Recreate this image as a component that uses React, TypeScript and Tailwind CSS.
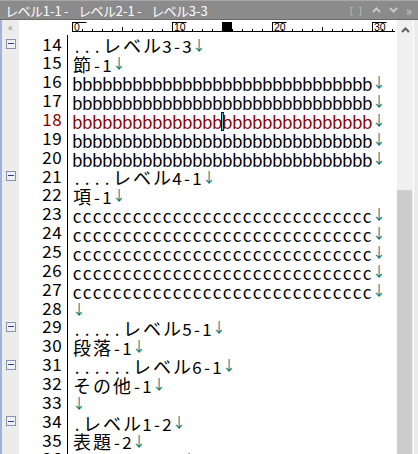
import React from "react";

const b30 = "b".repeat(30);
const c30 = "c".repeat(30);

const lines: { no: number; text: string; fold?: boolean; red?: boolean }[] = [
  { no: 14, text: "...レベル3-3↓", fold: true },
  { no: 15, text: "節-1↓" },
  { no: 16, text: b30 + "↓" },
  { no: 17, text: b30 + "↓" },
  { no: 18, text: b30 + "↓", red: true },
  { no: 19, text: b30 + "↓" },
  { no: 20, text: b30 + "↓" },
  { no: 21, text: "....レベル4-1↓", fold: true },
  { no: 22, text: "項-1↓" },
  { no: 23, text: c30 + "↓" },
  { no: 24, text: c30 + "↓" },
  { no: 25, text: c30 + "↓" },
  { no: 26, text: c30 + "↓" },
  { no: 27, text: c30 + "↓" },
  { no: 28, text: "↓" },
  { no: 29, text: ".....レベル5-1↓", fold: true },
  { no: 30, text: "段落-1↓" },
  { no: 31, text: "......レベル6-1↓", fold: true },
  { no: 32, text: "その他-1↓" },
  { no: 33, text: "↓" },
  { no: 34, text: ".レベル1-2↓", fold: true },
  { no: 35, text: "表題-2↓" },
  { no: 36, text: "..レベル2-1↓", fold: true },
];

// cursor position (line 18, column 15)
const CURSOR_LINE = 18;
const CURSOR_COL = 15;

function Cells({ text, cursorAt }: { text: string; cursorAt?: number }) {
  let col = 0;
  return (
    <>
      {Array.from(text).map((ch, i) => {
        const wide = ch.charCodeAt(0) > 0x2000 && ch !== "↓";
        const here = cursorAt !== undefined && col === cursorAt;
        col += wide ? 2 : 1;
        if (ch === "↓") {
          return (
            <span
              key={i}
              className="inline-block w-[10px] overflow-hidden text-center text-[14px] text-[#008080]"
            >
              ↓
            </span>
          );
        }
        return (
          <span
            key={i}
            className={
              wide
                ? "relative inline-block w-[20px] text-center text-[18px]"
                : "relative inline-block w-[10px] text-center text-[17px]"
            }
          >
            {ch}
            {here && (
              <span className="absolute left-[-1px] top-[-1px] h-[19px] w-[3px] bg-black">
                <span className="absolute left-[1px] top-[1px] h-[17px] w-[1px] bg-[#40e0e0]" />
              </span>
            )}
          </span>
        );
      })}
    </>
  );
}

function FoldBox() {
  return (
    <span className="flex h-[10px] w-[10px] items-center justify-center border border-[#8a93ad] bg-[#eef0f4]">
      <span className="h-[1px] w-[6px] bg-[#2f3f94]" />
    </span>
  );
}

function Ruler() {
  const ticks = Array.from({ length: 33 }, (_, k) => k);
  return (
    <svg width="323" height="14.5" className="block">
      <line x1="0" y1="11.5" x2="323" y2="11.5" stroke="#000" />
      {ticks.map((k) => {
        const x = k * 10 + 0.5;
        if (k % 10 === 0) {
          return (
            <g key={k}>
              <line x1={x} y1="2" x2={x} y2="12" stroke="#000" />
              <line x1={x} y1="2.5" x2={x + 14} y2="2.5" stroke="#000" />
              <text
                x={x + 1.5}
                y="10.5"
                fontSize="10.5"
                fontFamily="'Liberation Sans', sans-serif"
                fill="#000"
              >
                {String(k)}
              </text>
            </g>
          );
        }
        const h = k % 5 === 0 ? 5 : 3;
        return <line key={k} x1={x} y1={12 - h} x2={x} y2="12" stroke="#000" />;
      })}
      <rect x={CURSOR_COL * 10} y="2" width="10" height="10" fill="#000" />
    </svg>
  );
}

function Chevron({ dir, color }: { dir: "up" | "down"; color: string }) {
  return (
    <svg width="9" height="6" viewBox="0 0 9 6">
      <path
        d={dir === "up" ? "M1 5 L4.5 1.5 L8 5" : "M1 1 L4.5 4.5 L8 1"}
        fill="none"
        stroke={color}
        strokeWidth="2"
      />
    </svg>
  );
}

export default function App() {
  return (
    <div className="flex h-[454px] w-[418px] flex-col overflow-hidden bg-white font-['Noto_Sans_CJK_JP',sans-serif]">
      {/* title bar */}
      <div className="flex h-[20px] shrink-0 items-center border-t border-t-[#a8a8a8] border-b border-b-[#6a6a6a] bg-[#8b8b8b] pl-[6px] pr-[6px] text-[13px] leading-none text-white [font-feature-settings:'palt']">
        <span className="w-[58px]">レベル1-1</span>
        <span className="w-[15px]">-</span>
        <span className="w-[58px]">レベル2-1</span>
        <span className="w-[15px]">-</span>
        <span className="w-[58px]">レベル3-3</span>
        <div className="ml-auto flex items-center gap-[8px] text-[#c8c8c8]">
          <span className="text-[9px] tracking-[2px]">[ ]</span>
          <Chevron dir="up" color="#c8c8c8" />
          <Chevron dir="down" color="#c8c8c8" />
          <span className="text-[13px] leading-none">»</span>
        </div>
      </div>

      <div className="flex flex-1 overflow-hidden">
        {/* editor */}
        <div className="flex w-[397px] flex-col">
          <div className="flex h-[14.5px] shrink-0">
            <div className="flex w-[19px] items-center justify-center border-l-2 border-[#9fb3d9] bg-[#ececec] text-[10px] leading-none text-[#8a8a8a]">
              «
            </div>
            <div className="w-[53px]" />
            <Ruler />
          </div>
          {lines.map((l) => (
            <div key={l.no} className="flex h-[18.86px] shrink-0 leading-[18.86px]">
              <div className="flex w-[19px] items-center justify-center border-l-2 border-[#9fb3d9] bg-[#ececec]">
                {l.fold && <FoldBox />}
              </div>
              <div
                className={`flex w-[48px] justify-end pr-[5px] ${l.red ? "text-[#8b0000]" : "text-black"}`}
              >
                <Cells text={String(l.no)} />
              </div>
              <div
                className={`flex-1 whitespace-nowrap border-l border-black pl-[4px] ${l.red ? "text-[#8b0000]" : "text-black"}`}
              >
                <Cells text={l.text} cursorAt={l.no === CURSOR_LINE ? CURSOR_COL : undefined} />
              </div>
            </div>
          ))}
        </div>

        {/* vertical scrollbar */}
        <div className="flex w-[16px] flex-col bg-[#f0f0f0]">
          <div className="flex h-[20px] items-center justify-center">
            <Chevron dir="up" color="#606060" />
          </div>
          <div className="h-[150px]" />
          <div className="w-[15px] flex-1 bg-[#cdcdcd]" />
        </div>
        <div className="w-[1px] bg-white" />
        <div className="flex-1 bg-[#ececec]" />
      </div>
    </div>
  );
}
